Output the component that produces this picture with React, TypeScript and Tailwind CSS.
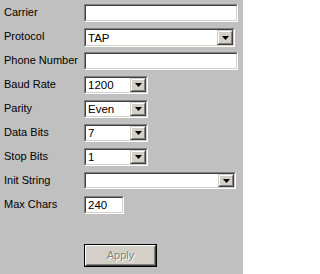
import React from "react";

const font = { fontFamily: '"Liberation Sans", Arial, sans-serif' };

function Sunken({ className = "", children }: { className?: string; children?: React.ReactNode }) {
  return (
    <div className={`border border-t-[#808080] border-l-[#808080] border-b-white border-r-white ${className}`}>
      <div className="h-full w-full border border-t-[#404040] border-l-[#404040] border-b-[#d4d0c8] border-r-[#d4d0c8] bg-white flex items-center">
        {children}
      </div>
    </div>
  );
}

function Arrow() {
  return (
    <div className="h-full w-[16px] shrink-0 border border-t-[#d4d0c8] border-l-[#d4d0c8] border-b-[#404040] border-r-[#404040]">
      <div className="h-full w-full border border-t-white border-l-white border-b-[#808080] border-r-[#808080] bg-[#d4d0c8] flex items-center justify-center">
        <svg width="7" height="4" viewBox="0 0 7 4">
          <path d="M0 0h7L3.5 4z" fill="#000" />
        </svg>
      </div>
    </div>
  );
}

function Combo({ value, className }: { value?: string; className: string }) {
  return (
    <Sunken className={className}>
      <span className="flex-1 pl-[2px] pt-[2px] text-[11.5px] leading-none text-black">{value}</span>
      <Arrow />
    </Sunken>
  );
}

function Row({ label, children }: { label: string; children: React.ReactNode }) {
  return (
    <div className="flex h-[24px] items-start">
      <div className="w-[84px] shrink-0 pl-[4px] pt-[1px] text-[11px] leading-[14px] text-black">{label}</div>
      {children}
    </div>
  );
}

export default function App() {
  return (
    <div className="w-[243px] h-[274px] bg-[#c0c0c0] pt-[4px]" style={font}>
      <Row label="Carrier">
        <Sunken className="w-[154px] h-[18px]" />
      </Row>
      <Row label="Protocol">
        <Combo value="TAP" className="w-[151px] h-[19px]" />
      </Row>
      <Row label="Phone Number">
        <Sunken className="w-[154px] h-[18px]" />
      </Row>
      <Row label="Baud Rate">
        <Combo value="1200" className="w-[64px] h-[18px]" />
      </Row>
      <Row label="Parity">
        <Combo value="Even" className="w-[64px] h-[18px]" />
      </Row>
      <Row label="Data Bits">
        <Combo value="7" className="w-[64px] h-[18px]" />
      </Row>
      <Row label="Stop Bits">
        <Combo value="1" className="w-[64px] h-[18px]" />
      </Row>
      <Row label="Init String">
        <Combo className="w-[152px] h-[17px]" />
      </Row>
      <Row label="Max Chars">
        <Sunken className="w-[40px] h-[18px]">
          <span className="pl-[2px] pt-[2px] text-[11.5px] leading-none text-black">240</span>
        </Sunken>
      </Row>
      <div className="mt-[24px] ml-[84px] w-[73px] h-[23px] border border-black">
        <div className="h-full w-full border border-t-white border-l-white border-b-[#404040] border-r-[#404040]">
          <div className="h-full w-full border border-t-[#d4d0c8] border-l-[#d4d0c8] border-b-[#808080] border-r-[#808080] bg-[#d4d0c8] flex items-center justify-center">
            <span className="text-[11px] text-[#808080] [text-shadow:1px_1px_0_#ffffff]">Apply</span>
          </div>
        </div>
      </div>
    </div>
  );
}
